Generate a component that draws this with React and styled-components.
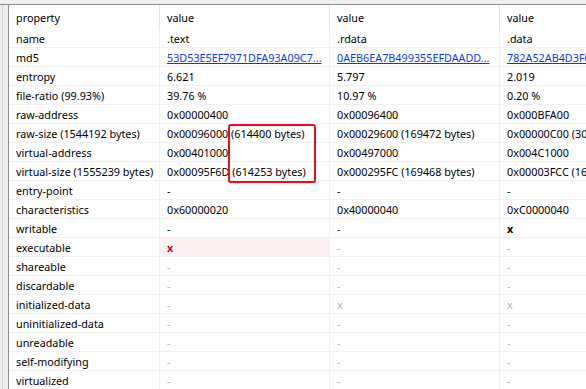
import React from "react";
import styled, { createGlobalStyle } from "styled-components";

const GlobalStyle = createGlobalStyle`
  html, body {
    margin: 0;
    padding: 0;
    background: #f0f0f0;
    overflow: hidden;
  }
  body {
    font-family: "Segoe UI", "Noto Sans", sans-serif;
    font-size: 10.8px;
  }
`;

const Window = styled.div`
  width: 586px;
  height: 389px;
  display: flex;
  flex-direction: column;
  background: #f0f0f0;
  overflow: hidden;
`;

const TopStrip = styled.div`
  height: 4px;
  flex: none;
  border-bottom: 1px solid #8d8d8d;
`;

const Body = styled.div`
  flex: 1;
  display: flex;
  min-height: 0;
`;

const SideStrip = styled.div`
  width: 9px;
  flex: none;
  box-sizing: border-box;
  border-left: 2px solid #f0f0f0;
  box-shadow: inset 1px 0 0 #d6d6d6;
  border-right: 1px solid #8d8d8d;
`;

const ListView = styled.div`
  position: relative;
  flex: 1;
  background: #fff;
  overflow: hidden;
`;

const Grid = styled.div`
  display: grid;
  grid-template-columns: 151px 170px 170px 170px;
  width: max-content;
`;

const HeaderCell = styled.div`
  height: 24px;
  padding-left: 7px;
  display: flex;
  align-items: center;
  border-right: 1px solid #e5e5e5;
  color: #000;
  white-space: nowrap;
  overflow: hidden;
`;

const Cell = styled.div`
  height: 18px;
  padding-left: 7px;
  display: flex;
  align-items: center;
  border-right: 1px solid #f0f0f0;
  border-bottom: 1px solid #f0f0f0;
  white-space: nowrap;
  overflow: hidden;
  color: ${(p) => (p.$muted ? "#b4b4b4" : "#000")};
  background: ${(p) => (p.$flag ? "#fdf1f3" : "transparent")};
`;

const Link = styled.a`
  color: #0b3ad8;
  text-decoration: underline;
`;

const Mark = styled.span`
  font-weight: bold;
  color: ${(p) => p.$color || "#000"};
`;

const Highlight = styled.div`
  position: absolute;
  left: 219px;
  top: 119px;
  width: 88px;
  height: 59px;
  box-sizing: border-box;
  border: 2px solid #e5101d;
  border-radius: 3px;
  pointer-events: none;
`;

const headers = ["property", "value", "value", "value"];

const D = { muted: true, text: "-" };
const X = { muted: true, text: "x" };

const rows = [
  ["name", ".text", ".rdata", ".data"],
  [
    "md5",
    { link: "53D53E5EF7971DFA93A09C7..." },
    { link: "0AEB6EA7B499355EFDAADD..." },
    { link: "782A52AB4D3F0E6A9B1C..." },
  ],
  ["entropy", "6.621", "5.797", "2.019"],
  ["file-ratio (99.93%)", "39.76 %", "10.97 %", "0.20 %"],
  ["raw-address", "0x00000400", "0x00096400", "0x000BFA00"],
  [
    "raw-size (1544192 bytes)",
    "0x00096000 (614400 bytes)",
    "0x00029600 (169472 bytes)",
    "0x00000C00 (3072 bytes)",
  ],
  ["virtual-address", "0x00401000", "0x00497000", "0x004C1000"],
  [
    "virtual-size (1555239 bytes)",
    "0x00095F6D (614253 bytes)",
    "0x000295FC (169468 bytes)",
    "0x00003FCC (16332 bytes)",
  ],
  ["entry-point", "-", "-", "-"],
  ["characteristics", "0x60000020", "0x40000040", "0xC0000040"],
  ["writable", "-", "-", { mark: "x" }],
  ["executable", { mark: "x", color: "#c0102a", flag: true }, D, D],
  ["shareable", D, D, D],
  ["discardable", D, D, D],
  ["initialized-data", D, X, X],
  ["uninitialized-data", D, D, D],
  ["unreadable", D, D, D],
  ["self-modifying", D, D, D],
  ["virtualized", D, D, D],
];

function renderValue(v) {
  if (typeof v === "string") return v;
  if (v.link) return <Link>{v.link}</Link>;
  if (v.mark) return <Mark $color={v.color}>{v.mark}</Mark>;
  return v.text;
}

export default function App() {
  return (
    <Window>
      <GlobalStyle />
      <TopStrip />
      <Body>
        <SideStrip />
        <ListView>
          <Grid>
            {headers.map((h, i) => (
              <HeaderCell key={i}>{h}</HeaderCell>
            ))}
            {rows.map((row, r) =>
              row.map((v, c) => (
                <Cell
                  key={`${r}-${c}`}
                  $muted={typeof v === "object" && v.muted}
                  $flag={typeof v === "object" && v.flag}
                >
                  {renderValue(v)}
                </Cell>
              ))
            )}
          </Grid>
          <Highlight />
        </ListView>
      </Body>
    </Window>
  );
}
